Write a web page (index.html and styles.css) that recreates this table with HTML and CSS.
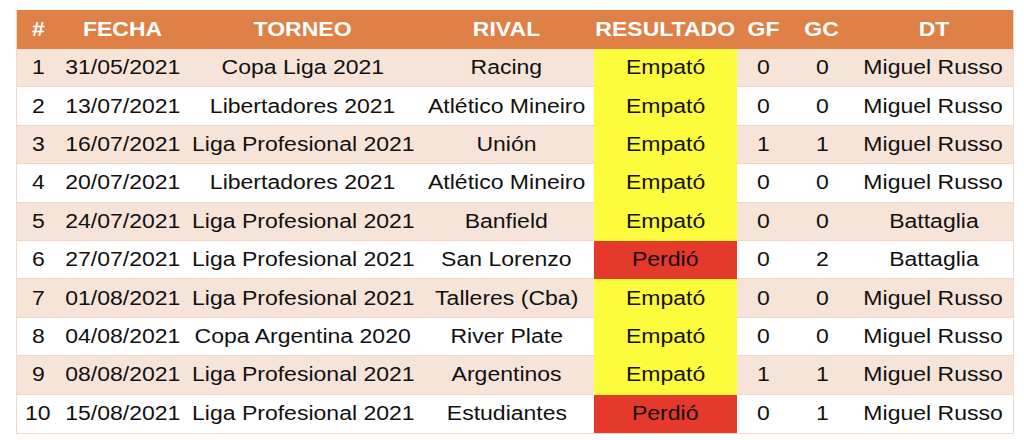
FILE: index.html
```html
<!DOCTYPE html>
<html lang="es">
<head>
<meta charset="utf-8">
<link rel="stylesheet" href="styles.css">
</head>
<body>
<table class="results">
  <colgroup>
    <col class="c-num"><col class="c-fecha"><col class="c-torneo"><col class="c-rival"><col class="c-res"><col class="c-gf"><col class="c-gc"><col class="c-dt">
  </colgroup>
  <thead>
    <tr><th><span>#</span></th><th><span>FECHA</span></th><th><span>TORNEO</span></th><th><span>RIVAL</span></th><th><span>RESULTADO</span></th><th><span>GF</span></th><th><span>GC</span></th><th><span>DT</span></th></tr>
  </thead>
  <tbody>
    <tr><td><span>1</span></td><td><span>31/05/2021</span></td><td><span>Copa Liga 2021</span></td><td><span>Racing</span></td><td class="draw"><span>Empató</span></td><td><span>0</span></td><td><span>0</span></td><td><span>Miguel Russo</span></td></tr>
    <tr><td><span>2</span></td><td><span>13/07/2021</span></td><td><span>Libertadores 2021</span></td><td><span>Atlético Mineiro</span></td><td class="draw"><span>Empató</span></td><td><span>0</span></td><td><span>0</span></td><td><span>Miguel Russo</span></td></tr>
    <tr><td><span>3</span></td><td><span>16/07/2021</span></td><td><span>Liga Profesional 2021</span></td><td><span>Unión</span></td><td class="draw"><span>Empató</span></td><td><span>1</span></td><td><span>1</span></td><td><span>Miguel Russo</span></td></tr>
    <tr><td><span>4</span></td><td><span>20/07/2021</span></td><td><span>Libertadores 2021</span></td><td><span>Atlético Mineiro</span></td><td class="draw"><span>Empató</span></td><td><span>0</span></td><td><span>0</span></td><td><span>Miguel Russo</span></td></tr>
    <tr><td><span>5</span></td><td><span>24/07/2021</span></td><td><span>Liga Profesional 2021</span></td><td><span>Banfield</span></td><td class="draw"><span>Empató</span></td><td><span>0</span></td><td><span>0</span></td><td><span>Battaglia</span></td></tr>
    <tr><td><span>6</span></td><td><span>27/07/2021</span></td><td><span>Liga Profesional 2021</span></td><td><span>San Lorenzo</span></td><td class="loss"><span>Perdió</span></td><td><span>0</span></td><td><span>2</span></td><td><span>Battaglia</span></td></tr>
    <tr><td><span>7</span></td><td><span>01/08/2021</span></td><td><span>Liga Profesional 2021</span></td><td><span>Talleres (Cba)</span></td><td class="draw"><span>Empató</span></td><td><span>0</span></td><td><span>0</span></td><td><span>Miguel Russo</span></td></tr>
    <tr><td><span>8</span></td><td><span>04/08/2021</span></td><td><span>Copa Argentina 2020</span></td><td><span>River Plate</span></td><td class="draw"><span>Empató</span></td><td><span>0</span></td><td><span>0</span></td><td><span>Miguel Russo</span></td></tr>
    <tr><td><span>9</span></td><td><span>08/08/2021</span></td><td><span>Liga Profesional 2021</span></td><td><span>Argentinos</span></td><td class="draw"><span>Empató</span></td><td><span>1</span></td><td><span>1</span></td><td><span>Miguel Russo</span></td></tr>
    <tr><td><span>10</span></td><td><span>15/08/2021</span></td><td><span>Liga Profesional 2021</span></td><td><span>Estudiantes</span></td><td class="loss"><span>Perdió</span></td><td><span>0</span></td><td><span>1</span></td><td><span>Miguel Russo</span></td></tr>
  </tbody>
</table>
</body>
</html>
```

FILE: styles.css
```css
html, body {
  margin: 0;
  padding: 0;
  background: #ffffff;
}
body {
  padding: 10px 12px 0 16px;
  font-family: "Liberation Sans", Arial, Helvetica, sans-serif;
}
.results {
  width: 996px;
  table-layout: fixed;
  border-collapse: separate;
  border-spacing: 0;
  border: 1px solid #f2d9c8;
  border-top: none;
  font-size: 19.5px;
  color: #111111;
}
.c-num { width: 42px; }
.c-fecha { width: 128px; }
.c-torneo { width: 232px; }
.c-rival { width: 175px; }
.c-res { width: 143px; }
.c-gf { width: 53px; }
.c-gc { width: 64px; }
.c-dt { width: 159px; }

.results th,
.results td {
  padding: 0;
  text-align: center;
  white-space: nowrap;
  overflow: visible;
}
.results span {
  display: inline-block;
  transform: scaleX(1.18);
}
.results th {
  height: 39px;
  background: #df8046;
  color: #ffffff;
  font-weight: bold;
}
.results td {
  height: 37.4px;
  border-bottom: 1px solid #f2d6c3;
}
.results tbody tr:last-child td {
  border-bottom: none;
  height: 38px;
}
.results tbody tr:nth-child(odd) td {
  background: #f7e4d8;
}
.results tbody tr td.draw {
  background: #fcfc3c;
  border-bottom-color: #fcfc3c;
}
.results tbody tr td.loss {
  background: #e5392b;
  border-bottom-color: #e5392b;
}
```
